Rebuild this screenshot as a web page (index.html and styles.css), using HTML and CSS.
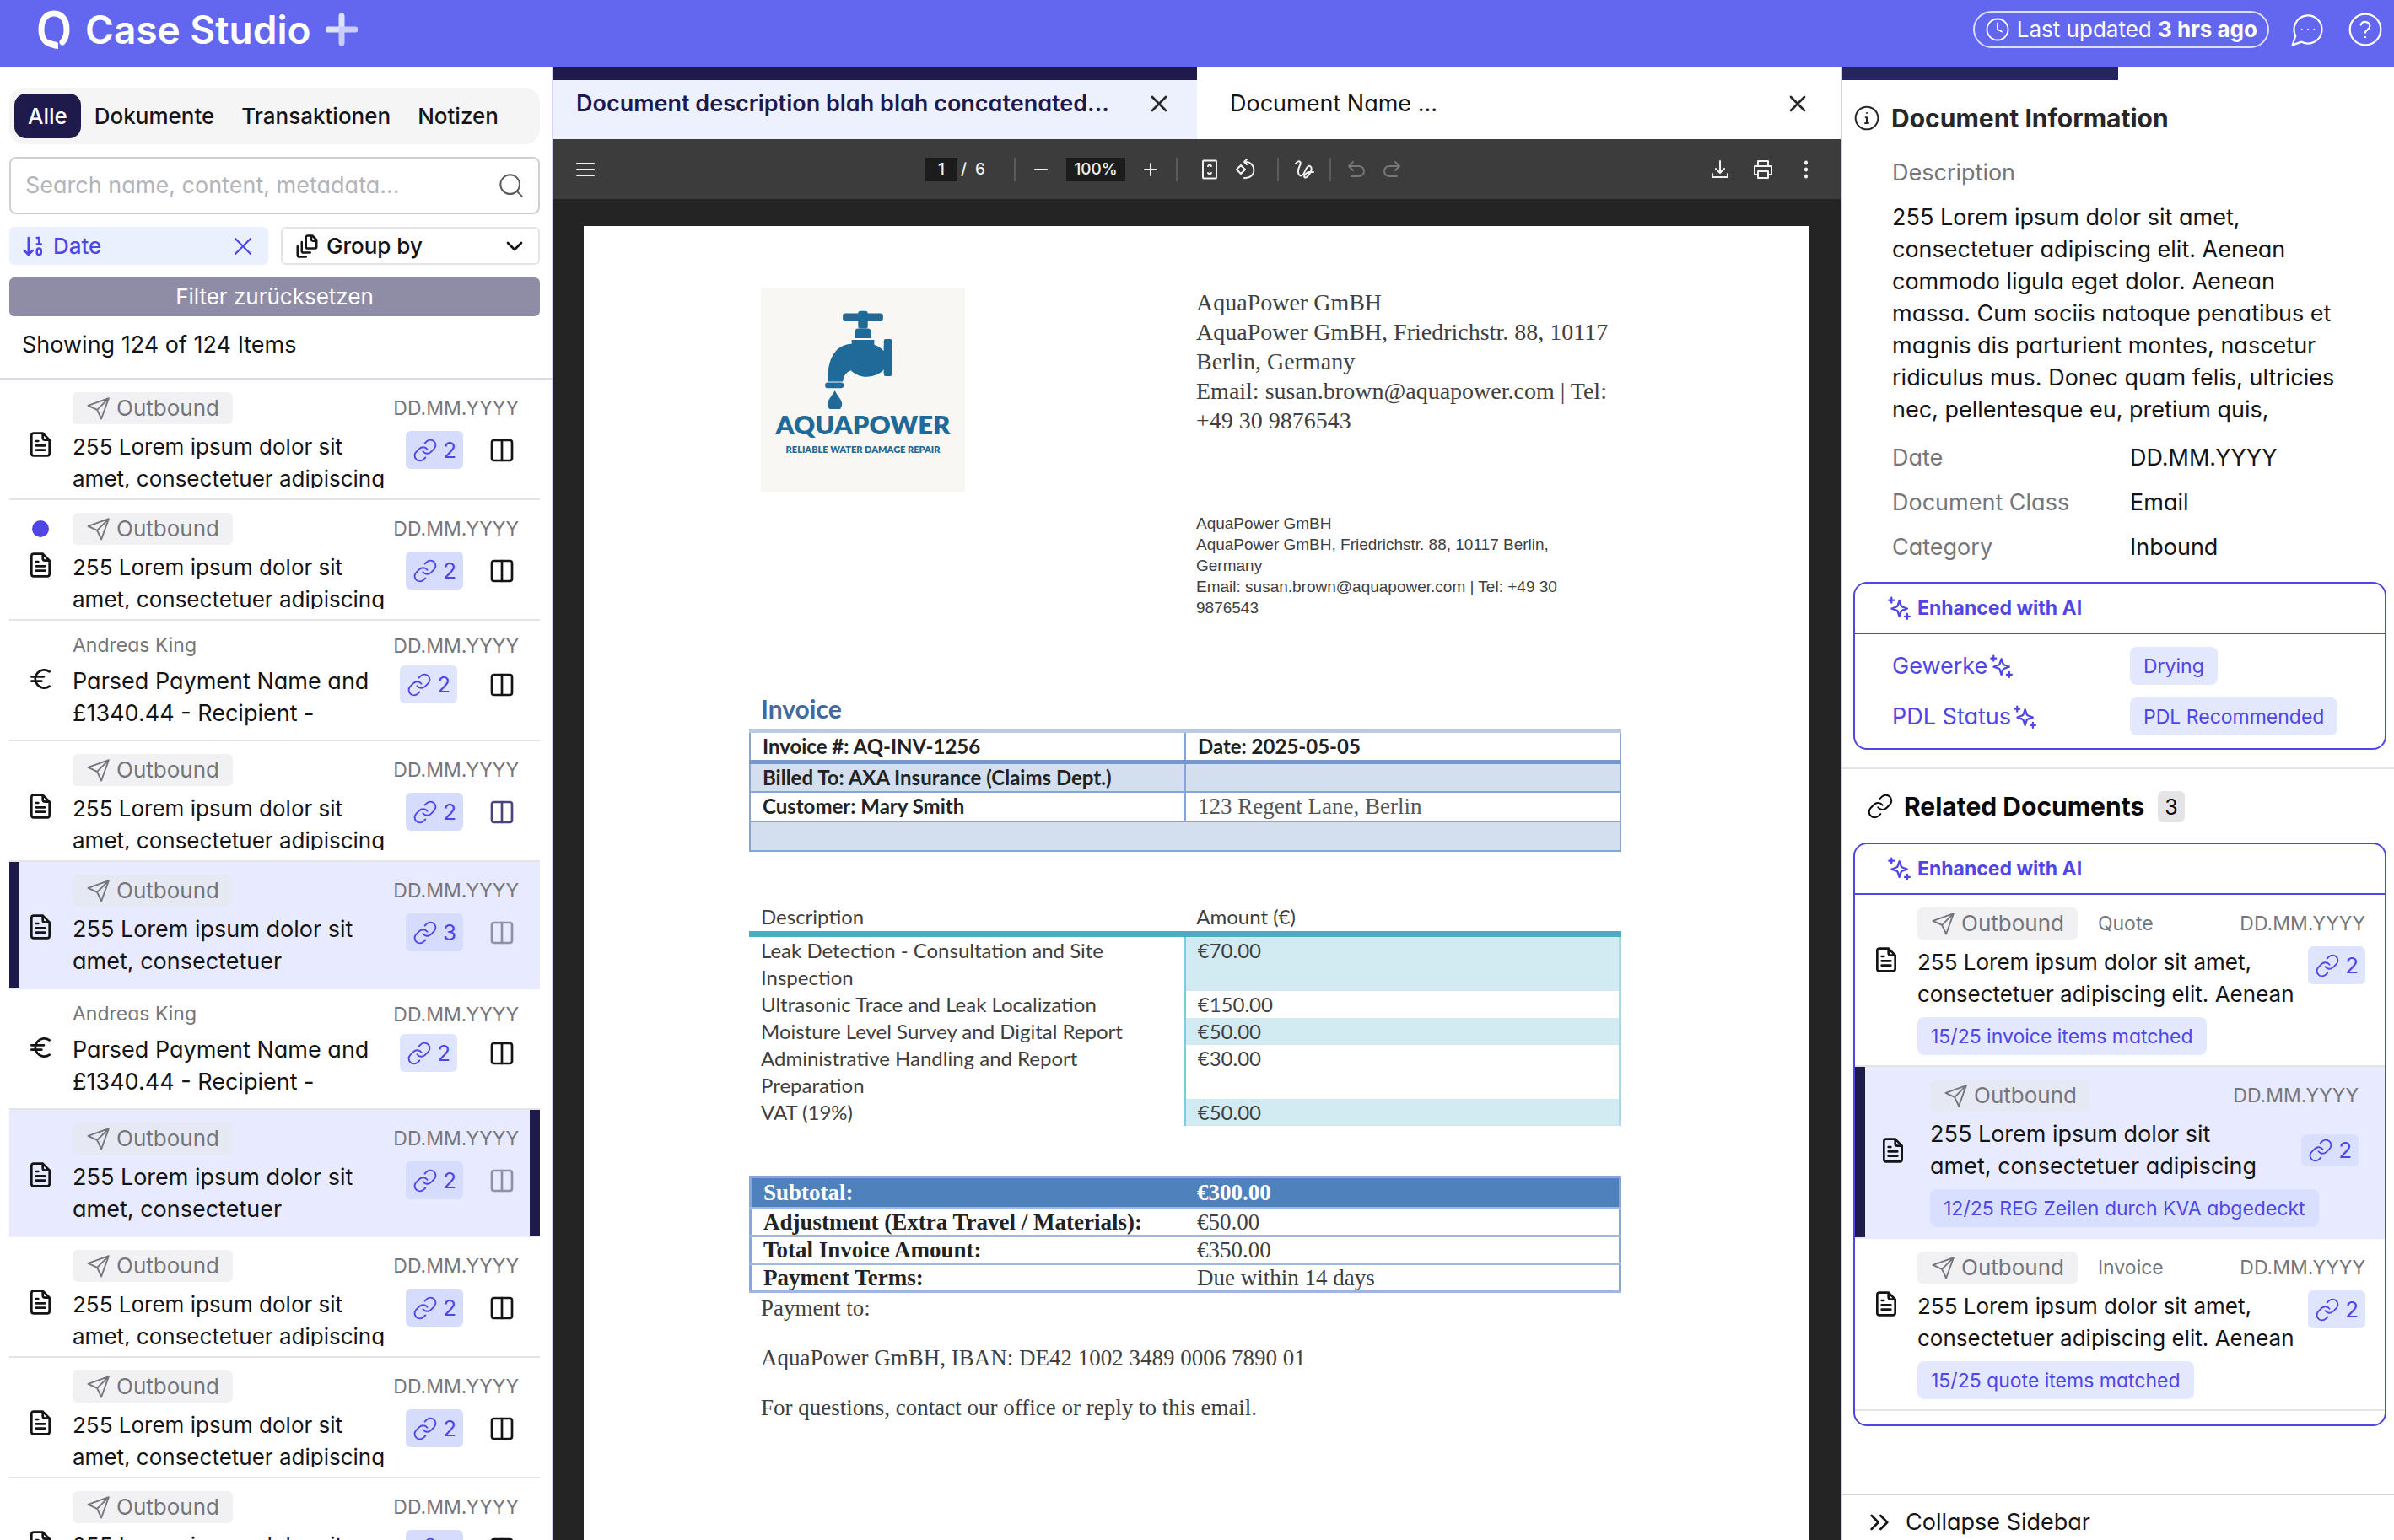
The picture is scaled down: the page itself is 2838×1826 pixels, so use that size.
FILE: index.html
```html
<!DOCTYPE html>
<html lang="de">
<head>
<meta charset="utf-8">
<meta name="viewport" content="width=device-width, initial-scale=1">
<title>Case Studio</title>
<link rel="stylesheet" href="styles.css">
</head>
<body>
<svg class="sprite" aria-hidden="true">
  <symbol id="send" viewBox="0 0 24 24"><path d="M21.5 2.5 14.5 22 10.500 13.500 2 9.500ZM21.500 2.500 10.500 13.500"/></symbol>
  <symbol id="doc" viewBox="0 0 24 24"><path d="M14 2H6a2 2 0 0 0-2 2v16a2 2 0 0 0 2 2h12a2 2 0 0 0 2-2V8ZM14 2v4a2 2 0 0 0 2 2h4M10 9H8M16 13H8M16 17H8"/></symbol>
  <symbol id="link" viewBox="0 0 24 24"><path d="M10 13a5 5 0 0 0 7.540.540l3-3a5 5 0 0 0-7.070-7.070l-1.720 1.710"/><path d="M14 11a5 5 0 0 0-7.540-.540l-3 3a5 5 0 0 0 7.070 7.070l1.710-1.710"/></symbol>
  <symbol id="split" viewBox="0 0 24 24"><rect x="3" y="3" width="18" height="18" rx="2"/><path d="M12 3v18"/></symbol>
  <symbol id="euro" viewBox="0 0 24 24"><path d="M4 10h11M4 14h9M20 5.500A8 8 0 1 0 20 18.500"/></symbol>
  <symbol id="search" viewBox="0 0 24 24"><circle cx="11" cy="11" r="8.500"/><path d="m21.500 21.500-4.500-4.500"/></symbol>
  <symbol id="x" viewBox="0 0 24 24"><path d="M18 6 6 18M6 6l12 12"/></symbol>
  <symbol id="down" viewBox="0 0 24 24"><path d="m6 9 6 6 6-6"/></symbol>
  <symbol id="sort" viewBox="0 0 24 24"><path d="m3 16 4 4 4-4M7 20V4M17 10V4h-2M15 10h4"/><rect x="15" y="14" width="4" height="6" ry="2"/></symbol>
  <symbol id="stack" viewBox="0 0 24 24"><path d="M21 7h-3a2 2 0 0 1-2-2V2M21 6v6.500c0 .8-.7 1.500-1.500 1.500h-7c-.8 0-1.500-.7-1.500-1.500v-9c0-.8.7-1.500 1.500-1.500H17ZM7 8v8.800c0 .3.2.6.4.8.2.2.5.4.8.4H15M3 12v8.800c0 .3.2.6.4.8.2.2.5.4.8.4H11"/></symbol>
  <symbol id="sparkles" viewBox="0 0 24 24"><path d="M12.500 4.500 10.900 9.400a2 2 0 0 1-1.300 1.300L4.700 12.500l4.900 1.700a2 2 0 0 1 1.300 1.300l1.600 5 1.700-5a2 2 0 0 1 1.300-1.300l4.900-1.700-4.900-1.800a2 2 0 0 1-1.300-1.300ZM4.500 1.500v5M2 4h5M20.500 18v5M18 20.500h5"/></symbol>
  <symbol id="info" viewBox="0 0 24 24"><circle cx="12" cy="12" r="10"/><path d="M12 16.500v-5h-1M10.500 16.500h3M12 7.500h.01"/></symbol>
  <symbol id="clock" viewBox="0 0 24 24"><circle cx="12" cy="12" r="10"/><path d="M12 6v6l4 2"/></symbol>
  <symbol id="chat" viewBox="0 0 24 24"><path d="M7.900 20A9 9 0 1 0 4 16.100L2 22ZM8 12h.01M12 12h.01M16 12h.01"/></symbol>
  <symbol id="help" viewBox="0 0 24 24"><circle cx="12" cy="12" r="10"/><path d="M9.100 9a3 3 0 0 1 5.800 1c0 2-2.900 2.300-2.900 4M12 17h.01"/></symbol>
  <symbol id="collapse" viewBox="0 0 24 24"><path d="m5 6 6 6-6 6M13 6l6 6-6 6"/></symbol>
</svg>

<header class="topbar">
  <div class="brand">
    <svg class="brand-mark" viewBox="0 0 38 46"><path d="M20 41C10 41 4 34 4 23 4 11 10 4 19 4s15 7 15 19c0 7-2 12-5 15" fill="none" stroke="#fff" stroke-width="7"/><path d="M12 35l12 4v7c-6 0-12-3-12-11Z" fill="#fff"/></svg>
    <h1>Case Studio</h1>
    <svg class="brand-plus" viewBox="0 0 38 38"><path d="M19 3v16H3" fill="none" stroke="#dfe2ff" stroke-width="7" stroke-linecap="round"/><path d="M19 35V19h16" fill="none" stroke="#c9cdfd" stroke-width="7" stroke-linecap="round"/></svg>
  </div>
  <div class="top-actions">
    <div class="updated"><svg class="i30"><use href="#clock"/></svg><span>Last updated <b>3 hrs ago</b></span></div>
    <button class="plain" aria-label="Chat"><svg class="i44"><use href="#chat"/></svg></button>
    <button class="plain" aria-label="Help"><svg class="i44"><use href="#help"/></svg></button>
  </div>
</header>

<div class="workspace">
  <aside class="browser">
    <div class="filters">
      <nav class="kinds"><button class="kind on">Alle</button><button class="kind">Dokumente</button><button class="kind">Transaktionen</button><button class="kind">Notizen</button></nav>
      <div class="search"><input type="text" aria-label="Search" placeholder="Search name, content, metadata..."><svg class="i32"><use href="#search"/></svg></div>
      <div class="pair">
        <button class="chip sort"><svg class="i30"><use href="#sort"/></svg><span>Date</span><svg class="i36 end"><use href="#x"/></svg></button>
        <button class="chip group"><svg class="i30"><use href="#stack"/></svg><span>Group by</span><svg class="i32 end"><use href="#down"/></svg></button>
      </div>
      <button class="reset">Filter zurücksetzen</button>
      <p class="count">Showing 124 of 124 Items</p>
    </div>
    <ul class="items">
      <li class="item"><svg class="kind-icon i32"><use href="#doc"/></svg><div class="head"><span class="badge"><svg class="i30"><use href="#send"/></svg>Outbound</span></div><time>DD.MM.YYYY</time><p class="title">255 Lorem ipsum dolor sit amet, consectetuer adipiscing</p><div class="acts"><button class="links"><svg class="i30"><use href="#link"/></svg>2</button><button class="plain" aria-label="Split view"><svg class="i32"><use href="#split"/></svg></button></div></li>
      <li class="item"><span class="dot"></span><svg class="kind-icon i32"><use href="#doc"/></svg><div class="head"><span class="badge"><svg class="i30"><use href="#send"/></svg>Outbound</span></div><time>DD.MM.YYYY</time><p class="title">255 Lorem ipsum dolor sit amet, consectetuer adipiscing</p><div class="acts"><button class="links"><svg class="i30"><use href="#link"/></svg>2</button><button class="plain" aria-label="Split view"><svg class="i32"><use href="#split"/></svg></button></div></li>
      <li class="item payment"><svg class="kind-icon i32"><use href="#euro"/></svg><div class="head">Andreas King</div><time>DD.MM.YYYY</time><p class="title">Parsed Payment Name and £1340.44 - Recipient -</p><div class="acts"><button class="links"><svg class="i30"><use href="#link"/></svg>2</button><button class="plain" aria-label="Split view"><svg class="i32"><use href="#split"/></svg></button></div></li>
      <li class="item"><svg class="kind-icon i32"><use href="#doc"/></svg><div class="head"><span class="badge"><svg class="i30"><use href="#send"/></svg>Outbound</span></div><time>DD.MM.YYYY</time><p class="title">255 Lorem ipsum dolor sit amet, consectetuer adipiscing</p><div class="acts"><button class="links"><svg class="i30"><use href="#link"/></svg>2</button><button class="plain tinted" aria-label="Split view"><svg class="i32"><use href="#split"/></svg></button></div></li>
      <li class="item open mark-left"><svg class="kind-icon i32"><use href="#doc"/></svg><div class="head"><span class="badge"><svg class="i30"><use href="#send"/></svg>Outbound</span></div><time>DD.MM.YYYY</time><p class="title">255 Lorem ipsum dolor sit<br>amet, consectetuer</p><div class="acts"><button class="links"><svg class="i30"><use href="#link"/></svg>3</button><button class="plain" aria-label="Split view"><svg class="i32"><use href="#split"/></svg></button></div></li>
      <li class="item payment"><svg class="kind-icon i32"><use href="#euro"/></svg><div class="head">Andreas King</div><time>DD.MM.YYYY</time><p class="title">Parsed Payment Name and £1340.44 - Recipient -</p><div class="acts"><button class="links"><svg class="i30"><use href="#link"/></svg>2</button><button class="plain" aria-label="Split view"><svg class="i32"><use href="#split"/></svg></button></div></li>
      <li class="item open mark-right"><svg class="kind-icon i32"><use href="#doc"/></svg><div class="head"><span class="badge"><svg class="i30"><use href="#send"/></svg>Outbound</span></div><time>DD.MM.YYYY</time><p class="title">255 Lorem ipsum dolor sit<br>amet, consectetuer</p><div class="acts"><button class="links"><svg class="i30"><use href="#link"/></svg>2</button><button class="plain" aria-label="Split view"><svg class="i32"><use href="#split"/></svg></button></div></li>
      <li class="item"><svg class="kind-icon i32"><use href="#doc"/></svg><div class="head"><span class="badge"><svg class="i30"><use href="#send"/></svg>Outbound</span></div><time>DD.MM.YYYY</time><p class="title">255 Lorem ipsum dolor sit amet, consectetuer adipiscing</p><div class="acts"><button class="links"><svg class="i30"><use href="#link"/></svg>2</button><button class="plain" aria-label="Split view"><svg class="i32"><use href="#split"/></svg></button></div></li>
      <li class="item"><svg class="kind-icon i32"><use href="#doc"/></svg><div class="head"><span class="badge"><svg class="i30"><use href="#send"/></svg>Outbound</span></div><time>DD.MM.YYYY</time><p class="title">255 Lorem ipsum dolor sit amet, consectetuer adipiscing</p><div class="acts"><button class="links"><svg class="i30"><use href="#link"/></svg>2</button><button class="plain" aria-label="Split view"><svg class="i32"><use href="#split"/></svg></button></div></li>
      <li class="item"><svg class="kind-icon i32"><use href="#doc"/></svg><div class="head"><span class="badge"><svg class="i30"><use href="#send"/></svg>Outbound</span></div><time>DD.MM.YYYY</time><p class="title">255 Lorem ipsum dolor sit amet, consectetuer adipiscing</p><div class="acts"><button class="links"><svg class="i30"><use href="#link"/></svg>2</button><button class="plain" aria-label="Split view"><svg class="i32"><use href="#split"/></svg></button></div></li>
    </ul>
  </aside>

  <main class="viewer">
    <div class="tabs">
      <div class="tab on"><span>Document description blah blah concatenated...</span><button class="plain" aria-label="Close"><svg class="i32"><use href="#x"/></svg></button></div>
      <div class="tab"><span>Document Name ...</span><button class="plain" aria-label="Close"><svg class="i32"><use href="#x"/></svg></button></div>
    </div>
    <div class="toolbar">
      <button class="plain" aria-label="Menu"><svg class="i24" viewBox="0 0 24 24"><path d="M2 5h20M2 12h20M2 19h20"/></svg></button>
      <div class="tools center">
        <input class="field page-no" type="text" value="1" aria-label="Page"><span class="of">/&nbsp; 6</span>
        <i class="sep"></i>
        <button class="plain" aria-label="Zoom out"><svg class="i24" viewBox="0 0 24 24"><path d="M5 12h14"/></svg></button>
        <input class="field zoom" type="text" value="100%" aria-label="Zoom">
        <button class="plain" aria-label="Zoom in"><svg class="i24" viewBox="0 0 24 24"><path d="M5 12h14M12 5v14"/></svg></button>
        <i class="sep"></i>
        <button class="plain wide" aria-label="Fit page"><svg class="i24" viewBox="0 0 24 24"><rect x="4" y="1.500" width="16" height="21" rx="1"/><path d="m10 8 2-2 2 2M10 16l2 2 2-2"/></svg></button>
        <button class="plain rotate" aria-label="Rotate"><svg class="i24" viewBox="0 0 24 24"><path d="m7 7 5 5-5 5-5-5ZM11 3h2a9 9 0 0 1 0 19h-2M14 0l-3 3 3 3"/></svg></button>
        <i class="sep"></i>
        <button class="plain" aria-label="Draw"><svg class="i24" viewBox="0 0 24 24"><path d="M2 5c4-5 7-2 5 2S4 15 6 18s5 1 7-4 5-8 7-5-1 8-4 11-5 1-3-2 5-4 10-3"/></svg></button>
        <i class="sep"></i>
        <button class="plain dim" aria-label="Undo"><svg class="i24" viewBox="0 0 24 24"><path d="M8 3 3 8l5 5M4 8h11a5 5 0 0 1 0 12H6"/></svg></button>
        <button class="plain dim" aria-label="Redo"><svg class="i24" viewBox="0 0 24 24"><path d="m16 3 5 5-5 5M20 8H9a5 5 0 0 0 0 12h9"/></svg></button>
      </div>
      <div class="tools right">
        <button class="plain" aria-label="Download"><svg class="i24" viewBox="0 0 24 24"><path d="M12 2v13M7 11l5 5 5-5M3 17v4h18v-4"/></svg></button>
        <button class="plain" aria-label="Print"><svg class="i24" viewBox="0 0 24 24"><path d="M6 7V2h12v5M6 18H2V8h20v10h-4M6 14h12v8H6Z"/></svg></button>
        <button class="plain" aria-label="More"><svg class="i24" viewBox="0 0 24 24"><path d="M12 3.500v1M12 11.500v1M12 19.500v1" stroke-width="4"/></svg></button>
      </div>
    </div>
    <div class="canvas">
      <article class="sheet">
        <div class="letterhead">
          <div class="logo">
            <svg viewBox="0 0 242 130" fill="#1f6a98"><rect x="96" y="11" width="50" height="10" rx="3"/><rect x="115" y="8" width="12" height="22" rx="3"/><path d="M111 34q0-4 4-4h12q4 0 4 4v8h-20Z"/><path d="M107 44h28v6q8 3 12 8v-7h10v34h-10v-4c-8 9-27 14-41 1-7 3-9 7-10 14H77c0-30 10-46 30-47Z"/><rect x="147" y="43" width="10" height="46" rx="2"/><rect x="74" y="97" width="23" height="7" rx="3"/><path d="M86 107c5 9 9 12 9 17a9 9 0 0 1-18 0c0-5 4-8 9-17Z"/></svg>
            <strong>AQUAPOWER</strong>
            <small>RELIABLE WATER DAMAGE REPAIR</small>
          </div>
          <div class="senders">
            <address class="sender">AquaPower GmBH<br>AquaPower GmBH, Friedrichstr. 88, 10117<br>Berlin, Germany<br>Email: susan.brown@aquapower.com | Tel:<br>+49 30 9876543</address>
            <address class="sender small">AquaPower GmBH<br>AquaPower GmBH, Friedrichstr. 88, 10117 Berlin,<br>Germany<br>Email: susan.brown@aquapower.com | Tel: +49 30<br>9876543</address>
          </div>
        </div>
        <h2>Invoice</h2>
        <table class="facts">
          <tr><td>Invoice #: AQ-INV-1256</td><td>Date: 2025-05-05</td></tr>
          <tr class="shade"><td>Billed To: AXA Insurance (Claims Dept.)</td><td></td></tr>
          <tr><td>Customer: Mary Smith</td><td class="serif">123 Regent Lane, Berlin</td></tr>
          <tr class="shade"><td colspan="2"></td></tr>
        </table>
        <table class="lines">
          <thead><tr><th>Description</th><th>Amount (€)</th></tr></thead>
          <tbody>
            <tr><td>Leak Detection - Consultation and Site<br>Inspection</td><td>€70.00</td></tr>
            <tr><td>Ultrasonic Trace and Leak Localization</td><td>€150.00</td></tr>
            <tr><td>Moisture Level Survey and Digital Report</td><td>€50.00</td></tr>
            <tr><td>Administrative Handling and Report<br>Preparation</td><td>€30.00</td></tr>
            <tr><td>VAT (19%)</td><td>€50.00</td></tr>
          </tbody>
        </table>
        <table class="totals">
          <tr class="lead"><th>Subtotal:</th><td>€300.00</td></tr>
          <tr><th>Adjustment (Extra Travel / Materials):</th><td>€50.00</td></tr>
          <tr><th>Total Invoice Amount:</th><td>€350.00</td></tr>
          <tr><th>Payment Terms:</th><td>Due within 14 days</td></tr>
        </table>
        <div class="closing">
          <p>Payment to:</p>
          <p>AquaPower GmBH, IBAN: DE42 1002 3489 0006 7890 01</p>
          <p>For questions, contact our office or reply to this email.</p>
        </div>
      </article>
    </div>
  </main>

  <aside class="details">
    <div class="progress"></div>
    <section class="info">
      <h2 class="section-title"><svg class="i32"><use href="#info"/></svg>Document Information</h2>
      <div class="about">
        <h3>Description</h3>
        <p>255 Lorem ipsum dolor sit amet,<br>consectetuer adipiscing elit. Aenean<br>commodo ligula eget dolor. Aenean<br>massa. Cum sociis natoque penatibus et<br>magnis dis parturient montes, nascetur<br>ridiculus mus. Donec quam felis, ultricies<br>nec, pellentesque eu, pretium quis,</p>
        <dl><dt>Date</dt><dd>DD.MM.YYYY</dd><dt>Document Class</dt><dd>Email</dd><dt>Category</dt><dd>Inbound</dd></dl>
      </div>
      <div class="card">
        <h4><svg class="i28"><use href="#sparkles"/></svg>Enhanced with AI</h4>
        <dl class="ai"><dt>Gewerke<svg class="i28"><use href="#sparkles"/></svg></dt><dd><span class="tag">Drying</span></dd><dt>PDL Status<svg class="i28"><use href="#sparkles"/></svg></dt><dd><span class="tag">PDL Recommended</span></dd></dl>
      </div>
    </section>
    <section class="related">
      <h2 class="section-title"><svg class="i32"><use href="#link"/></svg>Related Documents<span class="total">3</span></h2>
      <div class="card">
        <h4><svg class="i28"><use href="#sparkles"/></svg>Enhanced with AI</h4>
        <ul>
          <li class="item rel"><svg class="kind-icon i32"><use href="#doc"/></svg><div class="head"><span class="badge"><svg class="i30"><use href="#send"/></svg>Outbound</span>Quote</div><time>DD.MM.YYYY</time><p class="title">255 Lorem ipsum dolor sit amet,<br>consectetuer adipiscing elit. Aenean</p><div class="acts"><button class="links"><svg class="i30"><use href="#link"/></svg>2</button></div><span class="tag">15/25 invoice items matched</span></li>
          <li class="item rel open mark-left"><svg class="kind-icon i32"><use href="#doc"/></svg><div class="head"><span class="badge"><svg class="i30"><use href="#send"/></svg>Outbound</span></div><time>DD.MM.YYYY</time><p class="title">255 Lorem ipsum dolor sit<br>amet, consectetuer adipiscing</p><div class="acts"><button class="links"><svg class="i30"><use href="#link"/></svg>2</button></div><span class="tag">12/25 REG Zeilen durch KVA abgedeckt</span></li>
          <li class="item rel"><svg class="kind-icon i32"><use href="#doc"/></svg><div class="head"><span class="badge"><svg class="i30"><use href="#send"/></svg>Outbound</span>Invoice</div><time>DD.MM.YYYY</time><p class="title">255 Lorem ipsum dolor sit amet,<br>consectetuer adipiscing elit. Aenean</p><div class="acts"><button class="links"><svg class="i30"><use href="#link"/></svg>2</button></div><span class="tag">15/25 quote items matched</span></li>
        </ul>
      </div>
    </section>
    <button class="collapse"><svg class="i32"><use href="#collapse"/></svg>Collapse Sidebar</button>
  </aside>
</div>
</body>
</html>
```
FILE: styles.css
```css
* { box-sizing: border-box; margin: 0; padding: 0; }

:root {
  --indigo: #4f46e5;
  --navy: #1e1a4b;
  --brand: #6366ee;
  --muted: #75757c;
  --line: #e4e4e7;
  --wash: #e8ebff;
}

body {
  height: 100vh;
  display: flex;
  flex-direction: column;
  overflow: hidden;
  background: #fff;
  color: #141416;
  font: 26px/38px Inter, "Liberation Sans", sans-serif;
}

button, input { font: inherit; color: inherit; border: 0; background: none; }
ul { list-style: none; }
svg { display: block; flex: none; fill: none; stroke: currentColor; stroke-width: 2; stroke-linecap: round; stroke-linejoin: round; }
.sprite { position: absolute; width: 0; height: 0; }
.plain { display: flex; }

.i24 { width: 24px; height: 24px; }
.i28 { width: 28px; height: 28px; }
.i30 { width: 30px; height: 30px; stroke-width: 1.500; }
.i32 { width: 32px; height: 32px; }
.i36 { width: 36px; height: 36px; stroke-width: 1.500; }
.i44 { width: 44px; height: 44px; stroke-width: 1.200; }

/* Top bar */
.topbar {
  flex: none;
  height: 80px;
  padding: 0 12px 10px 45px;
  display: flex;
  align-items: center;
  justify-content: space-between;
  background: var(--brand);
  color: #fff;
}
.brand { display: flex; align-items: center; gap: 18px; }
.brand h1 { font-size: 46px; line-height: 56px; font-weight: 600; }
.brand-mark { width: 38px; height: 46px; stroke: none; }
.brand-plus { width: 38px; height: 38px; }
.top-actions { display: flex; align-items: center; gap: 24px; }
.updated {
  height: 44px;
  padding: 0 12px;
  display: flex;
  align-items: center;
  gap: 8px;
  border: 2px solid #dcdefc;
  border-radius: 22px;
}
.updated b { font-weight: 700; }

/* Columns */
.workspace {
  flex: 1;
  min-height: 0;
  display: grid;
  grid-template-columns: 656px minmax(0, 1fr) 656px;
}
.browser, .viewer, .details { min-width: 0; min-height: 0; overflow: hidden; display: flex; flex-direction: column; }
.browser { border-right: 2px solid #d0d2fa; }
.details { border-left: 2px solid #d0d2fa; }

/* Filters */
.filters {
  padding: 24px 14px 20px 11px;
  display: flex;
  flex-direction: column;
  gap: 15px;
  border-bottom: 2px solid #dcdce0;
}
.kinds { height: 67px; padding: 7px 6px; display: flex; border-radius: 18px; background: #f5f5f6; }
.kind { padding: 0 16px; font-weight: 500; border-radius: 14px; }
.kind.on { background: var(--navy); color: #fff; }
.search {
  height: 68px;
  padding: 0 16px 0 17px;
  display: flex;
  align-items: center;
  border: 2px solid #cfcfd4;
  border-radius: 8px;
  color: #5a5a60;
}
.search input { flex: 1; min-width: 0; outline: 0; font-size: 27px; font-feature-settings: "cv11"; }
.search input::placeholder { color: #b4b4ba; opacity: 1; }
.search svg { stroke-width: 1.500; }
.pair { display: grid; grid-template-columns: 1fr 1fr; gap: 15px; }
.chip { height: 45px; padding: 0 12px 0 14px; display: flex; align-items: center; gap: 8px; border-radius: 6px; font-weight: 500; font-size: 26px; }
.chip .i30 { stroke-width: 2; }
.chip .end { margin-left: auto; }
.sort { background: #ebf0ff; color: var(--indigo); }
.group { border: 2px solid var(--line); }
.reset { height: 46px; border-radius: 6px; background: #8f8da6; color: #fff; }
.count { padding: 0 15px; font-size: 27px; }

/* List entries */
.item {
  display: grid;
  grid-template-columns: 75px minmax(0, 1fr) auto;
  grid-template-rows: 38px auto;
  row-gap: 8px;
  padding: 15px 25px 12px 0;
  border-bottom: 2px solid var(--line);
  align-items: start;
}
.items { padding: 0 14px 0 11px; }
.items .item { min-height: 143px; }
.kind-icon { grid-column: 1; grid-row: 2; margin-left: 21px; }
.dot { grid-column: 1; grid-row: 1; align-self: center; width: 20px; height: 20px; margin-left: 27px; border-radius: 50%; background: var(--indigo); }
.head { grid-column: 2; grid-row: 1; display: flex; align-items: center; gap: 24px; color: var(--muted); font-size: 23px; white-space: nowrap; font-feature-settings: "cv11"; }
.badge { height: 38px; padding: 0 16px; display: flex; align-items: center; gap: 6px; border-radius: 6px; background: #f1f1f3; font-size: 26px; }
.item time { grid-column: 3; grid-row: 1; align-self: center; justify-self: end; color: var(--muted); font-size: 23px; }
.title { grid-column: 2; grid-row: 2; height: 68px; overflow: hidden; }
.acts { grid-column: 3; grid-row: 2; padding-right: 4px; display: flex; align-items: center; justify-content: flex-end; gap: 30px; }
.links { height: 45px; padding: 0 8px; display: flex; align-items: center; gap: 6px; border-radius: 6px; background: #d6dcfe; color: var(--indigo); }
.items .item:not(.open, .payment) { padding-bottom: 11px; }
.tinted { color: #4a4573; }
.payment { grid-template-rows: 30px auto; }
.payment .head { line-height: 28px; }
.payment .title, .open .title { height: auto; font-size: 27px; font-feature-settings: "cv11"; }
.payment .links, .rel .links { background: #e0e5ff; }
.payment .acts { gap: 37px; }
.open { background: var(--wash); border-color: var(--wash); }
.open .badge { background: #e6e8f4; }
.open .plain { color: #8e90a8; }
.mark-left { box-shadow: inset 12px 0 var(--navy); }
.mark-right { box-shadow: inset -12px 0 var(--navy); }

/* Viewer */
.tabs { flex: none; height: 85px; display: grid; grid-template-columns: 1fr 1fr; }
.tab { padding: 15px 35px 14px 39px; display: flex; align-items: center; justify-content: space-between; font-size: 27px; font-feature-settings: "cv11"; white-space: nowrap; }
.tab.on { padding: 0 29px 14px 27px; border-top: 15px solid var(--navy); background: #edf1fe; color: var(--navy); font-weight: 600; }
.tab button { color: #27272a; }
.toolbar {
  flex: none;
  height: 71px;
  padding: 0 29px 0 26px;
  display: grid;
  grid-template-columns: 1fr auto 1fr;
  align-items: center;
  background: #3c3c3c;
  color: #f1f1f1;
  font-size: 19px;
  font-weight: 500;
}
.tools { display: flex; align-items: center; gap: 18px; }
.tools.center { padding-right: 76px; }
.wide { margin-left: 8px; }
.rotate { margin-right: 8px; }
.tools.right { justify-content: flex-end; gap: 27px; }
.field { height: 28px; background: #1c1c1c; text-align: center; }
.page-no { width: 38px; }
.zoom { width: 70px; }
.of { margin: 0 16px 0 -14px; }
.sep { width: 2px; height: 28px; background: #5c5c5c; }
.dim { color: #777; }
.canvas { flex: 1; min-height: 0; padding: 32px 38px 0 36px; background: #242424; }

/* Invoice sheet */
.sheet { min-height: 100%; padding: 73px 222px 0 196px; background: #fff; color: #3f3f3f; font: 24px/32px Lato, "Open Sans", sans-serif; }
.letterhead { display: grid; grid-template-columns: 1fr 1fr; }
.logo { width: 242px; height: 242px; margin-left: 14px; padding-top: 20px; display: flex; flex-direction: column; align-items: center; background: #f9f7f4; color: #1f6a98; }
.logo svg { width: 242px; height: 124px; stroke: none; fill: #1f6a98; }
.logo strong { font-size: 31px; line-height: 36px; font-weight: 800; }
.logo small { font-size: 11px; line-height: 24px; font-weight: 800; }
.senders { padding-left: 13px; display: flex; flex-direction: column; gap: 92px; }
.sender { font: 28px/35px "Liberation Serif", serif; white-space: nowrap; }
.sender.small { font: 19px/25px "Liberation Sans", sans-serif; }
.sheet h2 { margin-top: 88px; padding: 0 14px; font-size: 30px; line-height: 38px; color: #44699d; }
.sheet table { width: 100%; border-collapse: collapse; table-layout: fixed; }
.sheet td, .sheet th { height: 32px; padding: 0 14px; text-align: left; font-weight: 400; vertical-align: top; }
.facts { margin-top: 5px; border: 2px solid #86a5d5; border-top: 5px solid #b9cae5; font-weight: 700; }
.sheet .facts td { height: 35px; border: 2px solid #86a5d5; font-weight: 700; color: #222; }
.sheet .facts tr:first-child td { border-top: 5px solid #b9cae5; border-bottom: 5px solid #7298cc; }
.facts .shade { background: #d3dfee; }
.sheet .facts .serif, .totals, .closing { font-family: "Liberation Serif", serif; font-size: 27px; }
.sheet .facts .serif { font-weight: 400; color: #555; }
.lines { margin-top: 61px; }
.lines thead th { height: 36px; border-bottom: 7px solid #4bacc6; }
.lines td + td { border-left: 3px solid #78cddb; border-right: 3px solid #a8dde6; }
.lines tbody tr:nth-child(odd) td + td { background: #d2eaf1; }
.totals { margin-top: 59px; border: 3px solid #86a9db; }
.totals tr { border-bottom: 3px solid #9db8de; }
.sheet .totals th, .sheet .totals td { height: 30px; line-height: 30px; }
.sheet .totals th { font-weight: 700; color: #222; }
.totals .lead { background: #4f81bd; }
.sheet .totals .lead > * { height: 34px; line-height: 34px; color: #fff; font-weight: 700; }
.closing { padding: 2px 14px; display: flex; flex-direction: column; gap: 27px; }

/* Details */
.progress { flex: none; width: 50%; height: 15px; background: #25265e; }
.section-title { display: flex; align-items: center; font-size: 30px; line-height: 38px; font-weight: 700; }
.info { padding: 26px 9px 21px 13px; border-bottom: 2px solid var(--line); }
.info .section-title { gap: 13px; color: #27272a; }
.info .section-title svg, .related .section-title svg { stroke-width: 1.500; }
.about { padding: 27px 0 22px 46px; font-size: 27px; font-feature-settings: "cv11"; }
.about h3 { font-size: 27px; font-weight: 400; color: var(--muted); }
.about p { margin: 15px 0 19px; white-space: nowrap; }
.about dl { display: grid; grid-template-columns: 282px 1fr; row-gap: 15px; }
.about dt { color: var(--muted); }
.card { border: 2px solid var(--indigo); border-radius: 16px; overflow: hidden; }
.card h4 { height: 60px; padding: 0 38px; display: flex; align-items: center; gap: 8px; border-bottom: 2px solid var(--indigo); color: var(--indigo); font-size: 23px; font-weight: 700; }
.ai { padding: 15px 0 15px 44px; display: grid; grid-template-columns: 282px 1fr; row-gap: 15px; align-items: center; color: var(--indigo); font-size: 27px; font-feature-settings: "cv11"; }
.ai dt { display: flex; align-items: center; gap: 2px; }
.tag { width: max-content; height: 45px; padding: 0 16px; display: flex; align-items: center; border-radius: 8px; background: #e3e8ff; color: var(--indigo); font-size: 23px; font-feature-settings: "cv11"; }
.related { padding: 25px 9px 0 13px; }
.related .section-title { padding: 0 16px; margin-bottom: 24px; gap: 12px; color: #09090b; }
.total { height: 37px; margin-left: 4px; padding: 0 8px; border-radius: 6px; background: #e4e4e7; font-size: 25px; font-weight: 400; }
.related .card { padding-bottom: 16px; }
.rel { grid-template-columns: 74px minmax(0, 1fr) auto; padding-right: 23px; }
.rel .title { height: 76px; white-space: nowrap; overflow: visible; }
.rel .acts { padding-right: 0; }
.rel .tag { grid-column: 2 / -1; grid-row: 3; }
.rel.open { grid-template-columns: 89px minmax(0, 1fr) auto; padding-right: 31px; }
.rel.open .kind-icon { margin-left: 29px; align-self: center; }
.rel.open .acts { align-self: center; }
.rel.open .links { height: 38px; }
.rel.open .links, .rel.open .tag { background: #d9e0ff; }
.collapse { margin-top: auto; height: 55px; padding: 10px 28px 0; display: flex; align-items: center; gap: 15px; border-top: 2px solid #d4d4d8; font-size: 27px; font-feature-settings: "cv11"; }
```
